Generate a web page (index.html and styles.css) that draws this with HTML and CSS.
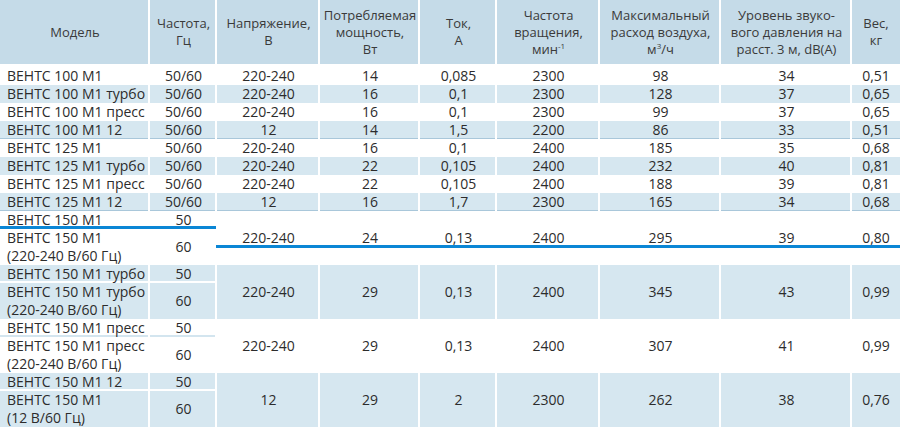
FILE: index.html
```html
<!DOCTYPE html>
<html lang="ru">
<head>
<meta charset="utf-8">
<title>ВЕНТС М1</title>
<link rel="stylesheet" href="styles.css">
</head>
<body>
<div class="wrap">
<table class="spec">
  <colgroup>
    <col class="c1"><col class="c2"><col class="c3"><col class="c4"><col class="c5"><col class="c6"><col class="c7"><col class="c8"><col class="c9">
  </colgroup>
  <thead>
    <tr>
      <th>Модель</th>
      <th>Частота,<br>Гц</th>
      <th>Напряжение,<br>В</th>
      <th>Потребляемая<br>мощность,<br>Вт</th>
      <th>Ток,<br>А</th>
      <th>Частота<br>вращения,<br>мин<sup>-1</sup></th>
      <th>Максимальный<br>расход воздуха,<br>м<sup class="cube">3</sup>/ч</th>
      <th>Уровень звуко-<br>вого давления на<br>расст. 3 м, dB(A)</th>
      <th class="last">Вес,<br>кг</th>
    </tr>
  </thead>
  <tbody>
    <tr><td class="m">ВЕНТС 100 М1</td><td>50/60</td><td>220-240</td><td>14</td><td>0,085</td><td>2300</td><td>98</td><td>34</td><td class="last">0,51</td></tr>
    <tr class="s"><td class="m">ВЕНТС 100 М1 турбо</td><td>50/60</td><td>220-240</td><td>16</td><td>0,1</td><td>2300</td><td>128</td><td>37</td><td class="last">0,65</td></tr>
    <tr><td class="m">ВЕНТС 100 М1 пресс</td><td>50/60</td><td>220-240</td><td>16</td><td>0,1</td><td>2300</td><td>99</td><td>37</td><td class="last">0,65</td></tr>
    <tr class="s ge"><td class="m">ВЕНТС 100 М1 12</td><td>50/60</td><td>12</td><td>14</td><td>1,5</td><td>2200</td><td>86</td><td>33</td><td class="last">0,51</td></tr>
    <tr><td class="m">ВЕНТС 125 М1</td><td>50/60</td><td>220-240</td><td>16</td><td>0,1</td><td>2400</td><td>185</td><td>35</td><td class="last">0,68</td></tr>
    <tr class="s"><td class="m">ВЕНТС 125 М1 турбо</td><td>50/60</td><td>220-240</td><td>22</td><td>0,105</td><td>2400</td><td>232</td><td>40</td><td class="last">0,81</td></tr>
    <tr><td class="m">ВЕНТС 125 М1 пресс</td><td>50/60</td><td>220-240</td><td>22</td><td>0,105</td><td>2400</td><td>188</td><td>39</td><td class="last">0,81</td></tr>
    <tr class="s ge"><td class="m">ВЕНТС 125 М1 12</td><td>50/60</td><td>12</td><td>16</td><td>1,7</td><td>2300</td><td>165</td><td>34</td><td class="last">0,68</td></tr>

    <tr class="sub"><td class="m ls">ВЕНТС 150 М1</td><td class="ls">50</td><td rowspan="2">220-240</td><td rowspan="2">24</td><td rowspan="2">0,13</td><td rowspan="2">2400</td><td rowspan="2">295</td><td rowspan="2">39</td><td rowspan="2" class="last">0,80</td></tr>
    <tr class="two"><td class="m">ВЕНТС 150 М1<br>(220-240 В/60 Гц)</td><td>60</td></tr>

    <tr class="s sub"><td class="m ws">ВЕНТС 150 М1 турбо</td><td class="ws">50</td><td rowspan="2">220-240</td><td rowspan="2">29</td><td rowspan="2">0,13</td><td rowspan="2">2400</td><td rowspan="2">345</td><td rowspan="2">43</td><td rowspan="2" class="last">0,99</td></tr>
    <tr class="s two"><td class="m">ВЕНТС 150 М1 турбо<br>(220-240 В/60 Гц)</td><td>60</td></tr>

    <tr class="sub"><td class="m ls">ВЕНТС 150 М1 пресс</td><td class="ls">50</td><td rowspan="2">220-240</td><td rowspan="2">29</td><td rowspan="2">0,13</td><td rowspan="2">2400</td><td rowspan="2">307</td><td rowspan="2">41</td><td rowspan="2" class="last">0,99</td></tr>
    <tr class="two"><td class="m">ВЕНТС 150 М1 пресс<br>(220-240 В/60 Гц)</td><td>60</td></tr>

    <tr class="s sub"><td class="m ws">ВЕНТС 150 М1 12</td><td class="ws">50</td><td rowspan="2">12</td><td rowspan="2">29</td><td rowspan="2">2</td><td rowspan="2">2300</td><td rowspan="2">262</td><td rowspan="2">38</td><td rowspan="2" class="last">0,76</td></tr>
    <tr class="s two"><td class="m">ВЕНТС 150 М1<br>(12 В/60 Гц)</td><td>60</td></tr>
  </tbody>
</table>
<div class="mark mark-left"></div>
<div class="mark mark-right"></div>
</div>
</body>
</html>
```

FILE: styles.css
```css
html, body {
  margin: 0;
  padding: 0;
  background: #ffffff;
}

body {
  font-family: "Open Sans", "Noto Sans", sans-serif;
  color: #2c2c2c;
}

.wrap {
  position: relative;
  width: 900px;
}

.spec {
  width: 900px;
  border-collapse: separate;
  border-spacing: 0;
  table-layout: fixed;
}

.c1 { width: 150px; }
.c2 { width: 67px; }
.c3 { width: 103px; }
.c4 { width: 100px; }
.c5 { width: 77px; }
.c6 { width: 103px; }
.c7 { width: 121px; }
.c8 { width: 131px; }
.c9 { width: 48px; }

.spec th,
.spec td {
  padding: 0;
  text-align: center;
  vertical-align: middle;
  white-space: nowrap;
  box-shadow: inset -2px 0 0 #ffffff;
}

.spec th {
  height: 64px;
  padding-bottom: 3px;
  background: #c5dbe8;
  font-weight: normal;
  font-size: 13px;
  line-height: 17px;
  color: #3a3a3a;
  box-shadow: inset -2px 0 0 #ffffff, inset 0 -3px 0 #ffffff;
}

.spec th.last {
  box-shadow: inset 0 -3px 0 #ffffff;
}

.spec sup {
  font-size: 8px;
  line-height: 0;
  vertical-align: 5px;
}

.spec td {
  height: 18px;
  font-size: 14px;
  line-height: 18px;
}

.spec td.last {
  box-shadow: none;
}

.spec td.m {
  text-align: left;
  padding-left: 7px;
}

.spec tr.s td {
  background: #d6e7f0;
}

.spec tr.ge td {
  box-shadow: inset -2px 0 0 #ffffff, inset 0 -1px 0 #a9c7da;
}

.spec tr.ge td.last {
  box-shadow: inset 0 -1px 0 #a9c7da;
}

.spec tr.two td {
  height: 36px;
}

.spec td.ws {
  box-shadow: inset -2px 0 0 #ffffff, inset 0 -2px 0 #ffffff;
}

.spec td.ls {
  box-shadow: inset -2px 0 0 #ffffff, inset 0 -2px 0 #d3e5ef;
}

.mark {
  position: absolute;
  height: 3px;
  background: #0a86d5;
}

.mark-left {
  left: 0;
  top: 226px;
  width: 216px;
}

.mark-right {
  left: 216px;
  top: 245px;
  width: 684px;
}
```
